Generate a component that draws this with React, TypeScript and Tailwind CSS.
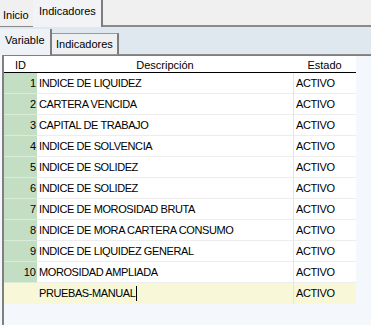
const rows = [
  { id: 1, desc: "INDICE DE LIQUIDEZ", estado: "ACTIVO" },
  { id: 2, desc: "CARTERA VENCIDA", estado: "ACTIVO" },
  { id: 3, desc: "CAPITAL DE TRABAJO", estado: "ACTIVO" },
  { id: 4, desc: "INDICE DE SOLVENCIA", estado: "ACTIVO" },
  { id: 5, desc: "INDICE DE SOLIDEZ", estado: "ACTIVO" },
  { id: 6, desc: "INDICE DE SOLIDEZ", estado: "ACTIVO" },
  { id: 7, desc: "INDICE DE MOROSIDAD BRUTA", estado: "ACTIVO" },
  { id: 8, desc: "INDICE DE MORA CARTERA CONSUMO", estado: "ACTIVO" },
  { id: 9, desc: "INDICE DE LIQUIDEZ GENERAL", estado: "ACTIVO" },
  { id: 10, desc: "MOROSIDAD AMPLIADA", estado: "ACTIVO" },
];

export default function App() {
  return (
    <div
      className="flex h-[325px] w-[371px] flex-col overflow-hidden bg-[#f4f7fb] text-[11px] text-black"
      style={{ fontFamily: '"Liberation Sans", Arial, sans-serif' }}
    >
      {/* pestañas principales */}
      <div className="flex h-[27px] items-end bg-[#f0f0f0]">
        <div className="flex h-[23px] w-[33px] items-center border-b border-[#8a8a8a] pl-[3px]">
          Inicio
        </div>
        <div className="flex h-[27px] w-[70px] items-center border-r-2 border-[#7d7d7d] bg-[#f1f3f6] pl-[6px] pb-[4px]">
          Indicadores
        </div>
        <div className="h-full flex-1 border-b-2 border-[#8a8a8a]" />
      </div>

      {/* pestañas internas */}
      <div className="flex h-[28px] items-end bg-[#dfe7ef]">
        <div className="flex h-[26px] w-[52px] items-center border-r-2 border-[#7d7d7d] bg-[#eef2f6] pl-[5px] pb-[3px]">
          Variable
        </div>
        <div className="flex h-[22px] w-[67px] items-center border-t border-r-2 border-b border-[#9a9a9a] border-r-[#7d7d7d] bg-[#eef0f2] pl-[4px] pt-[1px]">
          Indicadores
        </div>
        <div className="h-full flex-1 border-b border-[#8a8a8a]" />
      </div>

      {/* tabla */}
      <div className="ml-[2px] flex-1 border-t border-l-2 border-[#7f7f7f]">
        <div className="flex">
          <div className="grid grid-cols-[33px_256px_63px] bg-white">
            <Head label="ID" />
            <Head label="Descripción" />
            <Head label="Estado" />

            {rows.map((r) => (
              <Row key={r.id} id={String(r.id)} desc={r.desc} estado={r.estado} />
            ))}

            <div className="h-[21px] bg-[#f8f8d8]" />
            <div className="flex h-[21px] items-center bg-[#f8f8d8] pl-[2px] tracking-[-0.4px]">
              PRUEBAS-MANUAL
              <span className="ml-[1px] inline-block h-[15px] w-px bg-black" />
            </div>
            <div className="flex h-[21px] items-center border-l border-[#e4e4e4] bg-[#f8f8d8] pl-[2px] tracking-[-0.4px]">
              ACTIVO
            </div>
          </div>
          <div className="flex-1" />
        </div>
      </div>
    </div>
  );
}

function Head({ label }: { label: string }) {
  return (
    <div className="h-[17px]">
      <div className="mr-[2px] flex h-full w-full items-center justify-center border-b border-black pt-[3px]">
        {label}
      </div>
    </div>
  );
}

function Row({ id, desc, estado }: { id: string; desc: string; estado: string }) {
  return (
    <>
      <div className="flex h-[21px] items-center justify-end border-b border-[#d9ebd9] bg-[#c3dec3] pr-[1px] pt-px">
        {id}
      </div>
      <div className="flex h-[21px] items-center border-b border-[#ededed] bg-white pl-[2px] pt-px tracking-[-0.4px]">
        {desc}
      </div>
      <div className="flex h-[21px] items-center border-b border-l border-[#ededed] border-l-[#e4e4e4] bg-white pl-[2px] pt-px tracking-[-0.4px]">
        {estado}
      </div>
    </>
  );
}
